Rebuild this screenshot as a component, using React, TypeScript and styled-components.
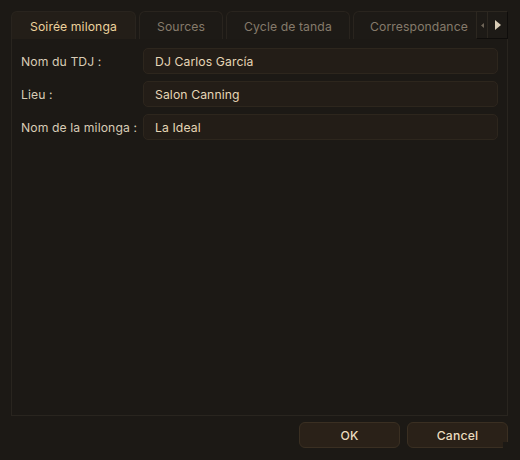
import React from 'react'
import styled, { createGlobalStyle } from 'styled-components'

const GlobalStyle = createGlobalStyle`
  html, body {
    margin: 0;
    background: #1c1915;
  }
  * {
    box-sizing: border-box;
  }
`

const Dialog = styled.div`
  width: 520px;
  height: 460px;
  padding: 11px 12px 0 11px;
  display: flex;
  flex-direction: column;
  font-family: Inter, 'Noto Sans', sans-serif;
  font-size: 12.2px;
  background: #1c1915;
`

const TabBar = styled.div`
  position: relative;
  display: flex;
  gap: 3px;
  height: 28px;
  overflow: hidden;
`

const Tab = styled.div<{ $active?: boolean; $width: number }>`
  flex: 0 0 ${(p) => p.$width}px;
  display: flex;
  align-items: center;
  justify-content: center;
  padding-top: 1px;
  border: 1px solid #29241e;
  border-bottom: none;
  border-radius: 6px 6px 0 0;
  background: ${(p) => (p.$active ? '#231e18' : '#1d1a16')};
  color: ${(p) => (p.$active ? '#ecd29c' : '#857a6b')};
  letter-spacing: 0.1px;
  white-space: nowrap;
`

const Scroller = styled.div`
  position: absolute;
  top: 0;
  right: 0;
  width: 32px;
  height: 28px;
  display: flex;
  background: #1d1a16;
  border: 1px solid #2c2720;
  border-right-color: #0f0d0b;
  border-bottom-color: #0f0d0b;
`

const ScrollButton = styled.div<{ $wide?: boolean }>`
  flex: ${(p) => (p.$wide ? '1' : '0 0 10px')};
  display: flex;
  align-items: center;
  justify-content: center;
  & + & {
    border-left: 1px solid #2c2720;
  }
`

const Pane = styled.div`
  height: 377px;
  border: 1px solid #29251f;
  border-top: none;
  padding: 9px 9px 0 9px;
  display: flex;
  flex-direction: column;
  gap: 7px;
`

const Row = styled.div`
  display: flex;
  align-items: center;
  height: 26px;
`

const Label = styled.span`
  width: 122px;
  color: #d8ccb6;
  letter-spacing: 0.1px;
`

const Field = styled.div`
  flex: 1;
  height: 26px;
  display: flex;
  align-items: center;
  padding-left: 11px;
  background: #231d17;
  border: 1px solid #2d261d;
  border-radius: 5px;
  color: #e6d6b6;
  letter-spacing: 0.1px;
`

const Footer = styled.div`
  position: relative;
  display: flex;
  justify-content: flex-end;
  gap: 7px;
  padding-top: 6px;
`

const Button = styled.button`
  width: 101px;
  height: 26px;
  padding: 0;
  background: #2a2118;
  border: 1px solid #3a2f22;
  border-radius: 6px;
  color: #eadcbf;
  font-family: inherit;
  font-size: 12.2px;
  font-weight: 500;
  letter-spacing: 0.2px;
`

const SizeGrip = styled.div`
  position: absolute;
  right: 0;
  top: 26px;
  width: 5px;
  height: 7px;
  background: #1c1915;
`

const tabs = [
  { label: 'Soirée milonga', width: 125 },
  { label: 'Sources', width: 84 },
  { label: 'Cycle de tanda', width: 124 },
  { label: 'Correspondance', width: 132 },
]

const fields = [
  { label: 'Nom du TDJ :', value: 'DJ Carlos García' },
  { label: 'Lieu :', value: 'Salon Canning' },
  { label: 'Nom de la milonga :', value: 'La Ideal' },
]

const App = () => {
  return (
    <>
      <GlobalStyle />
      <Dialog>
        <TabBar>
          {tabs.map((t, i) => (
            <Tab key={t.label} $active={i === 0} $width={t.width}>
              {t.label}
            </Tab>
          ))}
          <Scroller>
            <ScrollButton>
              <svg width='3' height='5' viewBox='0 0 3 5'>
                <path d='M3 0 L0 2.5 L3 5 Z' fill='#6f6558' />
              </svg>
            </ScrollButton>
            <ScrollButton $wide>
              <svg width='6' height='10' viewBox='0 0 6 10'>
                <path d='M0 0 L6 5 L0 10 Z' fill='#d8ccb6' />
              </svg>
            </ScrollButton>
          </Scroller>
        </TabBar>
        <Pane>
          {fields.map((f) => (
            <Row key={f.label}>
              <Label>{f.label}</Label>
              <Field>{f.value}</Field>
            </Row>
          ))}
        </Pane>
        <Footer>
          <Button>OK</Button>
          <Button>Cancel</Button>
          <SizeGrip />
        </Footer>
      </Dialog>
    </>
  )
}

export default App
